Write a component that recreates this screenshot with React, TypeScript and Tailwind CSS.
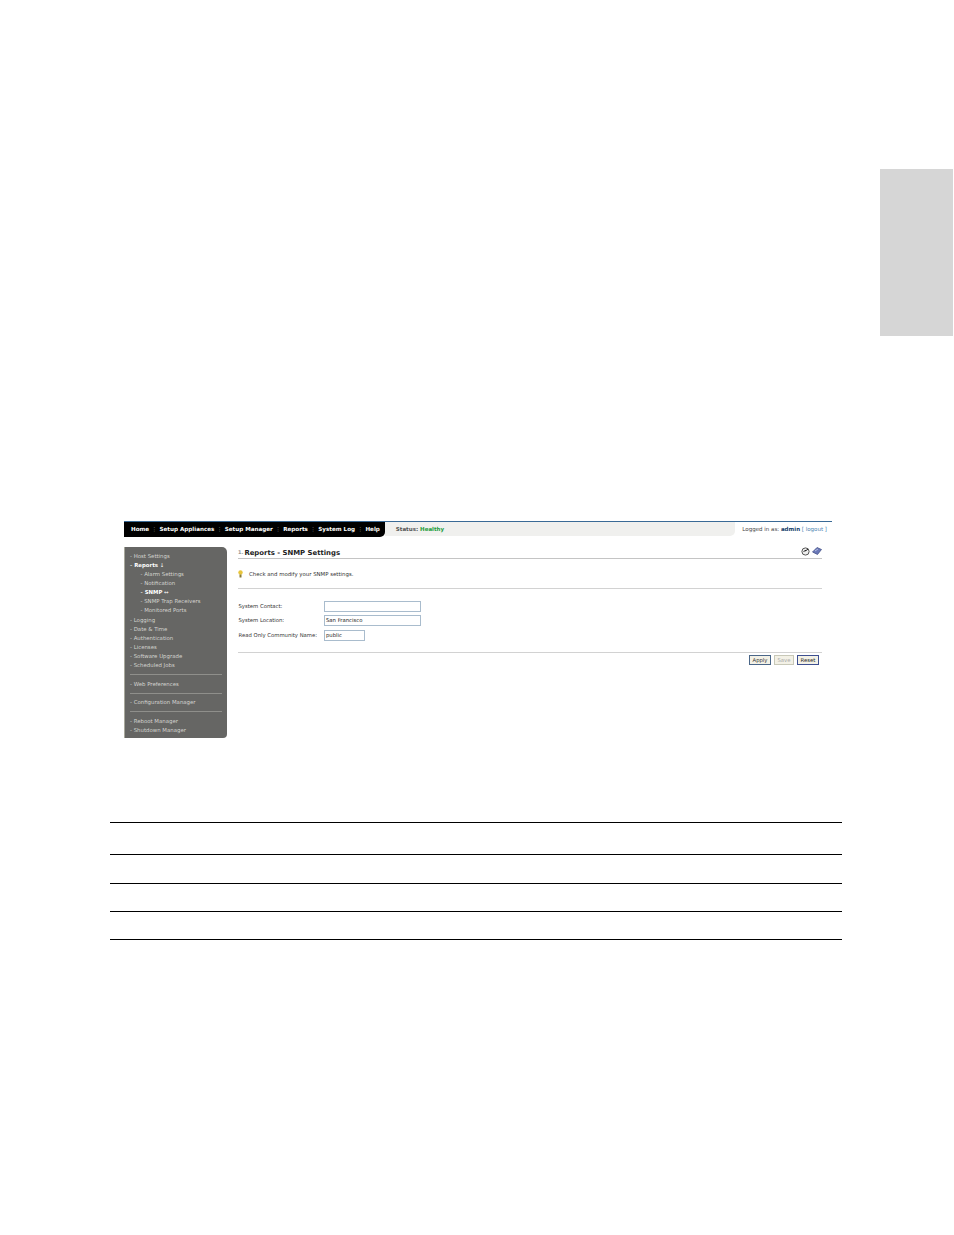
import React from 'react';

const navItems = ['Home', 'Setup Appliances', 'Setup Manager', 'Reports', 'System Log', 'Help'];

const SideLink: React.FC<{ label: string; sub?: boolean; active?: boolean; arrow?: string }> = ({ label, sub, active, arrow }) => (
  <div className={`h-[9px] leading-[9px] whitespace-nowrap ${sub ? 'pl-[15.5px]' : 'pl-[5px]'} ${active ? 'font-bold text-white' : 'text-[#d4d4d0]'}`}>
    <span className="text-[#d4d4d0]">- </span>{label}{arrow && <span className="font-normal"> {arrow}</span>}
  </div>
);

const Divider = () => <div className="mx-[5px] my-[4px] h-px bg-[#8f8f8b]" />;

const FormRow: React.FC<{ label: string; value?: string; short?: boolean }> = ({ label, value, short }) => (
  <div className="flex items-center h-[14.5px]">
    <div className="w-[86px] pl-[0.5px] pt-[1px] whitespace-nowrap text-[#333]">{label}</div>
    <div className={`h-[11px] border border-[#a9bccd] bg-white px-[1px] leading-[9px] text-[#222] ${short ? 'w-[41px] border-[#6f8cab]' : 'w-[97px]'}`}>{value}</div>
  </div>
);

export default function App() {
  return (
    <div className="w-[954px] h-[1235px] bg-white overflow-hidden pt-[169px] font-['DejaVu_Sans',sans-serif]">
      <div className="flex justify-end pr-px">
        <div className="w-[73px] h-[167px] bg-[#d6d6d6]" />
      </div>

      {/* screenshot of the appliance ui */}
      <div className="ml-[124px] mt-[185px] w-[708px] h-[217px] flex flex-col text-[5.3px] border-t border-[#3a6a96]">
        <div className="flex h-[15px]">
          <div className="flex items-center h-[15px] bg-black rounded-br-[5px] pl-[7px] pr-[5px] text-[5.6px] text-white font-bold whitespace-nowrap">
            {navItems.map((n, i) => (
              <React.Fragment key={n}>
                {i > 0 && <span className="w-[10.4px] text-center text-[#999] font-normal">⋮</span>}
                <span>{n}</span>
              </React.Fragment>
            ))}
          </div>
          <div className="flex-1 flex items-center h-[14px] bg-[#f0f0ee] rounded-br-[5px] pl-[11px] pt-[1px] font-bold text-[#555] text-[5.5px]">
            Status:&nbsp;<span className="text-[#1f9d3c]">Healthy</span>
          </div>
          <div className="w-[97px] flex items-center justify-end pr-[5px] text-[5.5px] whitespace-nowrap text-[#444]">
            Logged in as:&nbsp;<span className="font-bold text-[#16406b]">admin</span>&nbsp;<span className="text-[#4a7fb0]">[ logout ]</span>
          </div>
        </div>

        <div className="flex flex-1 pt-[10px]">
          <div className="w-[103px] h-[191px] bg-[#666664] rounded-tr-[5px] rounded-br-[4px] border-l border-[#a8a89c] pt-[5px] text-[5.4px]">
            <SideLink label="Host Settings" />
            <SideLink label="Reports" active arrow="↓" />
            <SideLink label="Alarm Settings" sub />
            <SideLink label="Notification" sub />
            <SideLink label="SNMP" sub active arrow="↔" />
            <SideLink label="SNMP Trap Receivers" sub />
            <SideLink label="Monitored Ports" sub />
            <div className="h-[1px]" />
            <SideLink label="Logging" />
            <SideLink label="Date & Time" />
            <SideLink label="Authentication" />
            <SideLink label="Licenses" />
            <SideLink label="Software Upgrade" />
            <SideLink label="Scheduled Jobs" />
            <Divider />
            <div className="h-[1px]" />
            <SideLink label="Web Preferences" />
            <Divider />
            <SideLink label="Configuration Manager" />
            <Divider />
            <div className="h-[1px]" />
            <SideLink label="Reboot Manager" />
            <SideLink label="Shutdown Manager" />
          </div>

          <div className="w-[584px] ml-[11px] flex flex-col">
            <div className="flex items-center justify-between h-[12px] border-b border-[#c4c4c4]">
              <div className="flex items-center text-[6.9px] font-bold text-[#222] whitespace-nowrap pt-[1px]">
                <span className="text-[#999] text-[5px] mr-[1px]">1.</span>Reports - SNMP Settings
              </div>
              <div className="flex items-center gap-[2px] pb-[3px]">
                <svg width="9" height="9" viewBox="0 0 9 9">
                  <circle cx="4.5" cy="4.5" r="3.6" fill="#eee" stroke="#444" strokeWidth="0.9" />
                  <path d="M2.5 5 L4.5 3 L4.5 4 L7 2" stroke="#222" strokeWidth="1" fill="none" />
                </svg>
                <svg width="10" height="8" viewBox="0 0 10 8">
                  <path d="M0.5 5 L5 0.5 L9.5 2.5 L5.5 7.5 Z" fill="#6a78b8" stroke="#3b4780" strokeWidth="0.7" />
                  <path d="M3 4 L6 2" stroke="#d5daf0" strokeWidth="0.7" />
                </svg>
              </div>
            </div>

            <div className="flex items-center h-[30px] border-b border-[#d2d2d2] text-[#333] text-[5.4px] whitespace-nowrap pt-[1px]">
              <svg width="5" height="8" viewBox="0 0 5 8" className="mr-[6px]">
                <circle cx="2.5" cy="2.5" r="2.2" fill="#e8c53a" />
                <rect x="1.5" y="4.5" width="2" height="3" fill="#8a7a30" />
              </svg>
              Check and modify your SNMP settings.
            </div>

            <div className="pt-[10px] pb-[6px] h-[64px] border-b border-[#d2d2d2]">
              <FormRow label="System Contact:" />
              <FormRow label="System Location:" value="San Francisco" />
              <FormRow label="Read Only Community Name:" value="public" short />
            </div>

            <div className="flex justify-end gap-[3px] pr-[3px] pt-[2px]">
              <button className="h-[10px] w-[22px] border border-[#4a6688] bg-[#f3f1e6] text-[#333] leading-[8px]">Apply</button>
              <button className="h-[10px] w-[20px] border border-[#c8c8b8] bg-[#f3f1e6] text-[#aaa] leading-[8px]">Save</button>
              <button className="h-[10px] w-[22px] border border-[#3d4f90] bg-[#f3f1e6] text-[#222] leading-[8px]">Reset</button>
            </div>
          </div>
        </div>
      </div>

      {/* empty table rules below the figure */}
      <div className="ml-[110px] mt-[84px] w-[732px]">
        <div className="h-[32px] border-t border-black" />
        <div className="h-[29px] border-t border-black" />
        <div className="h-[28px] border-t border-black" />
        <div className="h-[28px] border-t border-black" />
        <div className="border-t border-black" />
      </div>
    </div>
  );
}
